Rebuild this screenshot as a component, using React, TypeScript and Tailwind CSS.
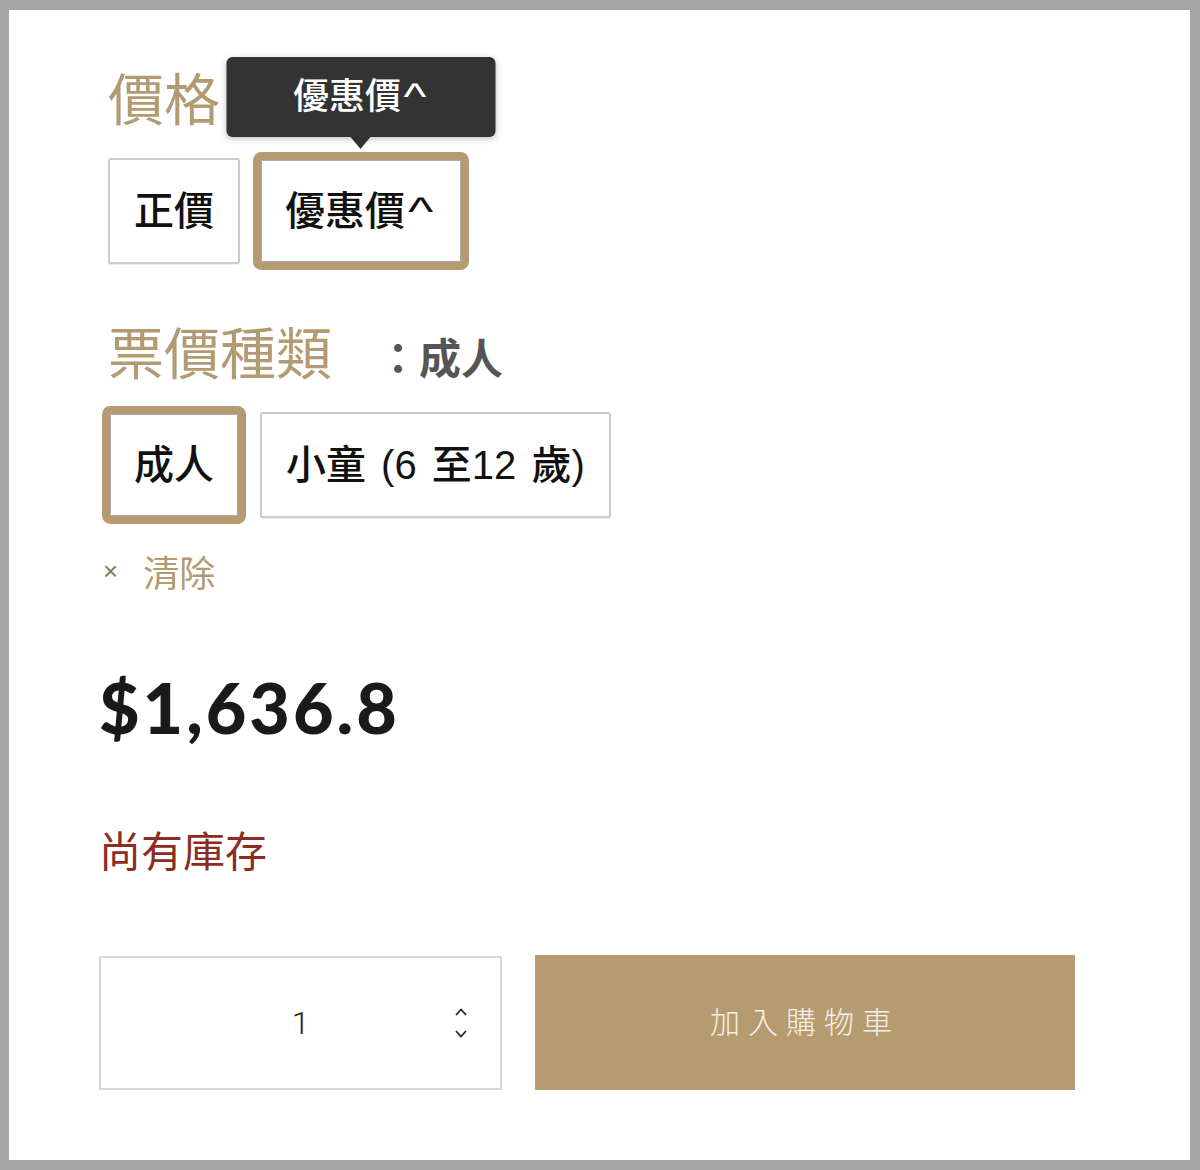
import { useState } from "react";

const cjk = "font-['Noto_Sans_CJK_TC','Noto_Sans',sans-serif]";
const btnFont = "font-['Liberation_Sans','Noto_Sans_CJK_TC',sans-serif]";

const priceOptions = [
  { label: "正價", code: "regular" },
  { label: "優惠價^", code: "promo" },
];

const ticketOptions = [
  { label: "成人", code: "adult" },
  { label: "小童 (6 至12 歲)", code: "child" },
];

// caret in the reference is wider than the font's ^
function Label({ text }: { text: string }) {
  if (!text.endsWith("^")) return <>{text}</>;
  return (
    <>
      {text.slice(0, -1)}
      <span className="inline-block ml-[3px] scale-x-[1.35] origin-left font-['Liberation_Sans',sans-serif] font-normal">^</span>
    </>
  );
}

function OptionButton({ label, active, tip }: { label: string; active: boolean; tip?: boolean }) {
  return (
    <button
      className={
        "relative h-[106px] px-[24px] rounded-[3px] bg-white text-[40px] leading-none font-medium text-[#111] [word-spacing:4px] " +
        btnFont +
        (label.endsWith("^") ? " pr-[34px]" : "") +
        (active
          ? " border-2 border-[#b59b6f] shadow-[0_0_0_6px_#b59b6f,inset_0_0_0_1px_#a9a9a9]"
          : " border-2 border-[#cbcbcb] shadow-[0_1px_1px_rgba(0,0,0,0.08)]")
      }
    >
      <Label text={label} />
      {tip ? (
        <div className="absolute left-1/2 -translate-x-1/2 bottom-full mb-[23px] w-[269px] h-[80px] rounded-[6px] bg-[#333333] shadow-[0_2px_6px_rgba(0,0,0,0.25)] flex items-center justify-center">
          <span className="text-[36px] leading-none font-medium text-white pr-[8px]">
            <Label text={label} />
          </span>
          <span className="absolute left-1/2 -translate-x-1/2 top-full w-0 h-0 border-x-[10px] border-x-transparent border-t-[12px] border-t-[#333333]" />
        </div>
      ) : null}
    </button>
  );
}

export default function App() {
  const [price] = useState("promo");
  const [ticket] = useState("adult");

  return (
    <div className="w-[1200px] h-[1170px] bg-[#a6a6a6] pt-[10px] pl-[9px] pr-[10px] pb-[10px]">
      <div className={"w-full h-full bg-white pl-[90px] " + cjk}>
        {/* options */}
        <div className="pl-[9px] pt-[56px]">
          <div className="h-[60px] text-[56px] leading-[60px] text-[#b29b72]">價格</div>
          <div className="flex gap-[19px] mt-[32px]">
            {priceOptions.map((o) => (
              <OptionButton key={o.code} label={o.label} active={price === o.code} tip={price === o.code} />
            ))}
          </div>

          <div className="flex items-baseline mt-[56px] h-[60px]">
            <span className="text-[56px] leading-[60px] text-[#b29b72]">票價種類</span>
            <span className="ml-[45px] text-[42px] leading-[60px] font-bold text-[#555555]">：成人</span>
          </div>
          <div className="flex gap-[20px] mt-[32px]">
            {ticketOptions.map((o) => (
              <OptionButton key={o.code} label={o.label} active={ticket === o.code} />
            ))}
          </div>
        </div>

        <div className="flex items-center mt-[33px] h-[40px] pl-[4px]">
          <span className="text-[26px] leading-none text-[#8a7a5c] font-['Liberation_Sans',sans-serif]">×</span>
          <span className="ml-[25px] text-[36px] leading-[40px] text-[#b29b72]">清除</span>
        </div>

        <div className="mt-[76px] h-[80px] text-[70px] leading-[80px] font-black text-[#1a1a1a] font-['Lato',sans-serif] tracking-[3px]">
          $1,636.8
        </div>

        <div className="mt-[78px] h-[48px] text-[42px] leading-[48px] text-[#8b2d22]">尚有庫存</div>

        <div className="flex gap-[33px] mt-[83px]">
          <div className="relative w-[403px] h-[134px] border-2 border-[#d6d6d6] flex items-center justify-center">
            <span className="text-[32px] font-light text-[#222] font-['Roboto',sans-serif]">1</span>
            <div className="absolute right-[33px] top-1/2 -translate-y-1/2 flex flex-col gap-[14px]">
              <svg width="12" height="8" viewBox="0 0 12 8" fill="none" stroke="#222" strokeWidth="1.8">
                <path d="M1 7 L6 1.5 L11 7" />
              </svg>
              <svg width="12" height="8" viewBox="0 0 12 8" fill="none" stroke="#222" strokeWidth="1.8">
                <path d="M1 1 L6 6.5 L11 1" />
              </svg>
            </div>
          </div>
          <button className="w-[540px] h-[135px] -mt-[1px] pb-[4px] bg-[#b59b6f] text-[30px] font-light tracking-[8px] text-[#f6f0e6]">
            加入購物車
          </button>
        </div>
      </div>
    </div>
  );
}
